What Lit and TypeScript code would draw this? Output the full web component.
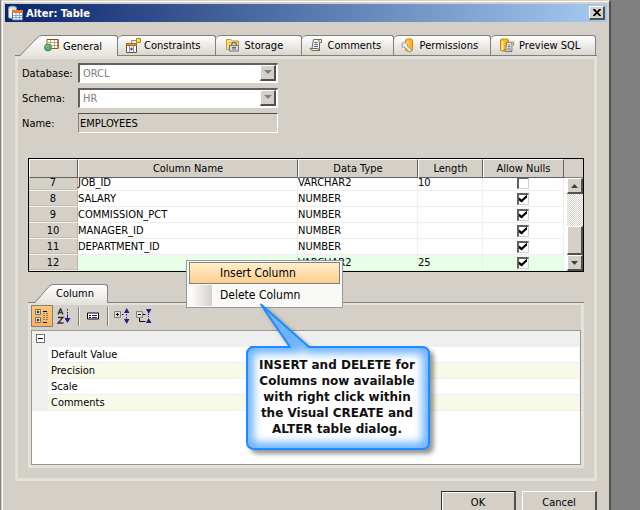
import { LitElement, html, css, svg } from "lit";
import { customElement, state } from "lit/decorators.js";
import { classMap } from "lit/directives/class-map.js";

const tableBody = svg`<path d="M3 1.500h11v9h-11z" fill="#fff" stroke="#8a5a1e"/><path d="M3 4.500h11M3 7.500h11M6.500 2v8M10.500 2v8" stroke="#c9a877" fill="none"/><path d="M3 1.500h11v9" stroke="#7a5424" fill="none"/>`;

const scroll = svg`<path d="M4.500 1.500h8v3h-2v8h-8l-1.500-2h2z" fill="#f4f2e6" stroke="#6f6a52"/><path d="M10.500 1.500c-1 .5-1 2.500 0 3M3 10.500h6c0 1 .5 2 1.500 2" fill="none" stroke="#6f6a52"/><path d="M5.500 4.500h3M5.500 6.500h3.500M5 8.500h4" stroke="#4a62a8" fill="none"/>`;

const icons = {
  general: svg`${tableBody}<circle cx="4" cy="9.500" r="3.500" fill="#58b070" stroke="#3c8a55"/><path d="M2.500 8.500a2 2 0 0 1 2-1.500" stroke="#a9dcb6" fill="none"/>`,
  constraints: svg`<path d="M1.500 5.500h10v9h-10z" fill="#fff" stroke="#7a4a1a"/><path d="M1.500 5.500h10v2h-10z" fill="#f0a040" stroke="#a85f1a"/><path d="M4.500 8v6.500M8.500 8v6.500" stroke="#8c8c9c"/><path d="M5 11h3M6.500 9.500v3" stroke="#1c50a0"/><path d="M6.500 5v-2.500h5" fill="none" stroke="#8c8c8c"/><path d="M11.500 .5h4v4h-4z" fill="#f8e04a" stroke="#9c8a30"/>`,
  storage: svg`<path d="M.5 11.500v-10h4.500l1.500 1.500h6v8.500z" fill="#ffe68a" stroke="#c69a28"/><path d="M3 12v-8h9" fill="none" stroke="#e4b93a"/><path d="M5.500 8v-1c0-3.500 5-3.500 5 0v1" fill="none" stroke="#777" stroke-width="1.500"/><path d="M3.500 7.500h9v5.500h-9z" fill="#d8d8d8" stroke="#777"/><path d="M6 9.500h4M6 11h4" stroke="#666"/>`,
  comments: scroll,
  permissions: svg`<path d="M4.500 2c0-1.500 7-1.500 7 0v10c0 1.500-7 1.500-7 0z" fill="#f9b522" stroke="#d4860c"/><path d="M6.500 3.500v8" stroke="#ffe58c" stroke-width="2"/><path d="M1 5.500l3-1.500 2.500 2v2l4 4-1.500 2.500-5-5-3-.5z" fill="#e6e6e6" stroke="#8a8a8a" stroke-width=".8"/>`,
  preview: svg`<path d="M.5 2c0-1.500 8-1.500 8 0v10c0 1.500-8 1.500-8 0z" fill="#f9b522" stroke="#c98a14"/><path d="M2.500 3v9" stroke="#ffe58c" stroke-width="2"/><g transform="translate(3 3) scale(.85)">${scroll}</g>`,
};

type Tab = { id: keyof typeof icons; label: string };
type Column = { n: number; name: string; type: string; len: string; nulls: boolean };

const TABS: Tab[] = [
  { id: "general", label: "General" },
  { id: "constraints", label: "Constraints" },
  { id: "storage", label: "Storage" },
  { id: "comments", label: "Comments" },
  { id: "permissions", label: "Permissions" },
  { id: "preview", label: "Preview SQL" },
];

const COLUMNS: Column[] = [
  { n: 7, name: "JOB_ID", type: "VARCHAR2", len: "10", nulls: false },
  { n: 8, name: "SALARY", type: "NUMBER", len: "", nulls: true },
  { n: 9, name: "COMMISSION_PCT", type: "NUMBER", len: "", nulls: true },
  { n: 10, name: "MANAGER_ID", type: "NUMBER", len: "", nulls: true },
  { n: 11, name: "DEPARTMENT_ID", type: "NUMBER", len: "", nulls: true },
  { n: 12, name: "", type: "VARCHAR2", len: "25", nulls: true },
];

const shared = css`
  *, *::before, *::after { box-sizing: border-box; }
  button, input, select { font: inherit; color: inherit; margin: 0; padding: 0; border-radius: 0; }
  svg { display: block; flex: none; }
`;

@customElement("column-grid")
class ColumnGrid extends LitElement {
  static styles = [shared, css`
    :host { display: flex; border: 1px solid #000; background: #fff; height: 114px; }
    .view { flex: 1; overflow: auto; scrollbar-width: none; }
    table { width: 100%; table-layout: fixed; border-collapse: separate; border-spacing: 0; }
    .c-num { width: 49px; } .c-type { width: 120px; } .c-len { width: 65px; } .c-null { width: 81px; }
    thead th {
      position: sticky; top: 0; z-index: 1; height: 19px; padding: 0; font-weight: normal; line-height: 16px;
      background: #d4d0c8; border: 1px solid; border-color: #fff #606060 #606060 #fff;
    }
    td, tbody th {
      height: 16px; padding: 0; line-height: 15px; font-weight: normal; white-space: nowrap;
      border-bottom: 1px solid #eee; border-right: 1px solid #eee;
    }
    tbody th { background: #d4d0c8; border-bottom-color: #f4f2ee; border-right-color: #bcb6a4; box-shadow: inset 0 -1px #c4beae; }
    .current td { background: #e6ffe6; border-color: #e0f8e0; }
    .tick { text-align: center; }
    input {
      appearance: none; display: block; width: 12px; height: 12px; margin: 0 auto; background: #fff;
      border: solid; border-width: 2px 1px 1px 2px; border-color: #606060 #d4d0c8 #d4d0c8 #606060;
    }
    input:checked::before {
      content: ""; display: block; width: 8px; height: 8px; background: #000;
      clip-path: polygon(0 38%, 32% 62%, 100% 0, 100% 38%, 32% 100%, 0 75%);
    }
    .bar { width: 19px; padding-left: 3px; display: flex; flex-direction: column; }
    .corner { height: 19px; margin-left: -3px; background: #d4d0c8; border-bottom: 1px solid #808080; }
    .arrow, .thumb {
      height: 16px; width: 16px; background: #d4d0c8; border: solid; border-width: 1px 2px 2px 1px;
      border-color: #fff #505050 #505050 #fff; display: grid; place-items: center;
    }
    .track { flex: 1; display: flex; flex-direction: column; justify-content: flex-end;
      background: repeating-conic-gradient(#fff 0 25%, #d4d0c8 0 50%) 0 0 / 2px 2px; }
    .thumb { height: 29px; }
  `];

  firstUpdated() {
    const view = this.renderRoot.querySelector(".view")!;
    view.scrollTop = view.scrollHeight;
  }

  render() {
    return html`
      <div class="view">
        <table>
          <colgroup><col class="c-num"><col><col class="c-type"><col class="c-len"><col class="c-null"></colgroup>
          <thead><tr><th></th><th scope="col">Column Name</th><th scope="col">Data Type</th><th scope="col">Length</th><th scope="col">Allow Nulls</th></tr></thead>
          <tbody>
            ${COLUMNS.map(c => html`
              <tr class=${classMap({ current: c.n === 12 })}>
                <th scope="row">${c.n}</th><td>${c.name}</td><td>${c.type}</td><td>${c.len}</td>
                <td class="tick"><input type="checkbox" aria-label="Allow nulls, row ${c.n}" .checked=${c.nulls}></td>
              </tr>`)}
          </tbody>
        </table>
      </div>
      <div class="bar">
        <div class="corner"></div>
        <button class="arrow" aria-label="Scroll up"><svg width="7" height="4"><path d="M0 4L3.500 0 7 4z" fill="#404040"/></svg></button>
        <div class="track"><div class="thumb"></div></div>
        <button class="arrow" aria-label="Scroll down"><svg width="7" height="4"><path d="M0 0h7L3.500 4z" fill="#404040"/></svg></button>
      </div>`;
  }
}

@customElement("column-properties")
class ColumnProperties extends LitElement {
  static styles = [shared, css`
    :host { display: block; }
    .tabs { display: flex; padding-left: 7px; height: 19px; border-bottom: 1px solid #808080; }
    .tab { display: flex; height: 19px; padding: 0; border: 0; background: none; }
    .tab span { width: 55px; height: 19px; padding-left: 3px; line-height: 18px; text-align: left;
      background: linear-gradient(#fff, #e6e4de); border: solid #808080; border-width: 1px 1px 0 0; border-radius: 0 3px 0 0; }
    .panel { border: 3px solid #e3e1da; border-top-width: 2px; }
    .tools { display: flex; align-items: center; height: 25px; padding-bottom: 3px; }
    .tools button { width: 22px; height: 22px; border: 0; background: none; display: grid; place-items: center; }
    .tools .on { background: linear-gradient(#ffc876, #ffb25c); border: 1px solid #808080; }
    .sep { width: 1px; height: 19px; background: #808080; margin: 0 3px; box-shadow: 1px 0 #f0eee8; }
    .props { height: 135px; background: #fff; border: 1px solid #989898; }
    .group { height: 16px; background: #efefef; padding: 3px 4px; }
    .group button { display: grid; place-items: center; width: 9px; height: 9px; border: 1px solid #707070; background: #fff; }
    .group button::before { content: ""; width: 5px; height: 1px; background: #000; }
    .list { margin: 0; padding: 0 1px 0 16px; background: #efefef; list-style: none; }
    .list li { height: 16px; padding-left: 3px; line-height: 15px; background: #fff; border-bottom: 1px solid #efefef; }
    .list li:nth-child(even) { background: #f9f9e9; }
  `];

  render() {
    return html`
      <div class="tabs">
        <button class="tab">
          <svg width="18" height="19"><defs><linearGradient id="g" x2="0" y2="1"><stop stop-color="#fff"/><stop offset="1" stop-color="#e6e4de"/></linearGradient></defs>
            <path d="M0 19L14 2.500Q16 .5 18 .5V19z" fill="url(#g)"/><path d="M0 18.500L14 2.500Q16 .5 18 .5" fill="none" stroke="#808080"/></svg>
          <span>Column</span>
        </button>
      </div>
      <div class="panel">
        <div class="tools">
          <button class="on" aria-label="Categorized"><svg width="16" height="16" fill="none">
            <path d="M1.500 1.500h5v5h-5zM1.500 9.500h5v5h-5z" fill="#fff" stroke="#707070"/><path d="M2.500 4h3M4 2.500v3M2.500 12h3M4 10.500v3" stroke="#000"/>
            <path d="M9 3.500h4M9 14.500h4" stroke="#000"/><path d="M9 5.500h6M9 7.500h6M9 9.500h6M9 11.500h6" stroke="#808080" stroke-dasharray="2 1"/></svg></button>
          <button aria-label="Sort by name"><svg width="16" height="16" fill="none">
            <path d="M2 6.500l2.500-6 2.500 6M3 4.500h3M2 9.500h5l-5 5.500h5.500" stroke="#303030" stroke-width="1.300"/>
            <path d="M11.500 1v1.500M11.500 4v1.500M11.500 6.500v4" stroke="#20208c"/><path d="M8.500 10h6l-3 5z" fill="#20208c"/></svg></button>
          <span class="sep"></span>
          <button aria-label="Property pages"><svg width="12" height="8" fill="none"><path d="M.5 1h11v6h-11z" fill="#fff" stroke="#000"/><path d="M2 3.500h2M2 5.500h2" stroke="#000"/><path d="M5 3.500h5M5 5.500h5" stroke="#20208c"/></svg></button>
          <span class="sep"></span>
          <button aria-label="Expand all"><svg width="16" height="16" fill="none"><path d="M.5 3.500h6v6h-6z" fill="#ddd" stroke="#808080"/><path d="M2 6.500h3M3.500 5v3M8 6.500h1.500" stroke="#000"/>
            <path d="M10 5h5.500L12.700 0zM10 11h5.500l-2.800 5z" fill="#20208c"/><path d="M12.500 6v1.500M12.500 9v1.500" stroke="#20208c"/></svg></button>
          <button aria-label="Collapse all"><svg width="16" height="16" fill="none"><path d="M.5 3.500h6v6h-6z" fill="#ddd" stroke="#808080"/><path d="M2 6.500h3M7 6.500h2.500M3.500 10v3.500h6" stroke="#000"/>
            <path d="M10 1h5.500l-2.800 5zM10 15h5.500l-2.800-5z" fill="#20208c"/><path d="M12.500 6v4" stroke="#20208c" stroke-dasharray="1 1"/></svg></button>
        </div>
        <div class="props">
          <div class="group"><button aria-label="Collapse group"></button></div>
          <ul class="list"><li>Default Value</li><li>Precision</li><li>Scale</li><li>Comments</li></ul>
        </div>
      </div>`;
  }
}

@customElement("app-root")
class AppRoot extends LitElement {
  @state() private active = "general";

  static styles = [shared, css`
    :host {
      display: flex; height: 100vh; overflow: hidden; background: #808080; padding: 0 29px 0 1px;
      font: 11px "DejaVu Sans Condensed", "DejaVu Sans", sans-serif; color: #000;
    }
    .dialog {
      position: relative; flex: 1; align-self: flex-start; background: #d4d0c8; padding: 2px 2px 10px 2px;
      border: solid; border-width: 1px 2px 0 1px; border-color: #d4d0c8 #505050 #505050 #d4d0c8;
      box-shadow: inset 1px 1px #fff;
    }
    .title { display: flex; align-items: center; gap: 3px; height: 18px; margin: 1px 0 0 1px; padding: 0 2px;
      background: linear-gradient(90deg, #0a246a, #a6caf0); color: #fff; }
    h1 { flex: 1; margin: 0; font-size: 11px; }
    .close { width: 16px; height: 14px; background: #d4d0c8; border: solid; border-width: 1px 2px 2px 1px;
      border-color: #fff #505050 #505050 #fff; display: grid; place-items: center; }
    .body { margin: 13px 10px 0 11px; }
    .tabs { display: flex; height: 21px; padding-left: 5px; border-bottom: 1px solid #808080; }
    .tab { flex: 99 1 0; display: flex; align-items: center; gap: 3px; height: 20px; padding: 0 0 0 7px; white-space: nowrap;
      border: solid #808080; border-width: 1px 1px 0 0; border-radius: 5px 3px 0 0; background: linear-gradient(#fff, #d9d6cf); }
    .storage { flex-grow: 83; padding-left: 10px; } .comments { flex-grow: 93; }
    .preview { flex-grow: 105; margin-right: 1px; padding-left: 9px; }
    .general { flex: none; height: 21px; padding: 0; border: 0; background: none; gap: 0; }
    .face { display: flex; align-items: center; gap: 3px; width: 76px; height: 21px; padding-left: 2px;
      background: linear-gradient(#fff, #e6e4de); border: solid #808080; border-width: 1px 1px 0 0; border-radius: 0 3px 0 0; }
    .page { border: 3px solid #e3e1da; padding: 4px 10px 10px 10px; }
    .form { display: grid; grid-template-columns: 56px 200px; row-gap: 5px; margin-left: -6px; align-items: center; }
    .combo, .name { height: 20px; border: solid; border-width: 2px 1px 1px 2px; border-color: #606060 #fff #fff #606060; }
    .combo { display: flex; background: #fff; padding-right: 1px; }
    select { appearance: none; flex: 1; border: 0; background: none; color: #808080; padding-left: 3px; opacity: 1; }
    .drop { width: 16px; height: 16px; background: #d4d0c8; display: grid; place-items: center;
      border: solid; border-width: 1px 2px 2px 1px; border-color: #fff #505050 #505050 #fff; }
    .name { background: #d4d0c8; width: 200px; border-width: 1px; border-color: #505050 #fff #fff #808080; padding-left: 1px; }
    column-grid { margin-top: 25px; }
    column-properties { margin-top: 12px; }
    .actions { display: flex; justify-content: flex-end; gap: 6px; margin-top: 10px; }
    .actions button { width: 75px; height: 23px; background: #d4d0c8; border: solid; border-width: 1px 2px 2px 1px;
      border-color: #fff #505050 #505050 #fff; }
    .actions .default { border-left-color: #303030; border-top-color: #303030; box-shadow: inset 1px 1px #fff; }
    .menu { position: absolute; left: 184px; top: 259px; width: 157px; background: #f9f9f7; border: 1px solid #989898; padding: 1px 2px; font-size: 12px; }
    .menu button { display: flex; align-items: center; width: 100%; height: 22px; border: 1px solid transparent; background: none; }
    .menu button::before { content: ""; width: 22px; height: 21px; margin-right: 8px; background: linear-gradient(90deg, #fff, #d4d0c8); }
    .menu .hot { background: linear-gradient(#ffefca, #ffce90); border-color: #808080; }
    .menu .hot::before { background: none; }
    .callout { position: absolute; left: 236px; top: 296px; width: 200px; height: 164px; }
    .callout svg { position: absolute; inset: 0; filter: drop-shadow(4px 4px 2px rgba(0, 0, 0, .4)); }
    .callout p { position: relative; margin: 0; padding: 60px 10px 0 8px; text-align: center; white-space: nowrap;
      font: bold 12px/16px "DejaVu Sans", sans-serif; color: #101010; }
  `];

  private tab(t: Tab) {
    const icon = html`<svg width="16" height="16" viewBox="0 0 16 16" fill="none">${icons[t.id]}</svg>`;
    const first = t.id === "general";
    return html`
      <button role="tab" aria-selected=${this.active === t.id} class="tab ${t.id}" @click=${() => (this.active = t.id)}>
        ${first ? html`
          <svg width="22" height="21"><defs><linearGradient id="s" x2="0" y2="1"><stop stop-color="#fff"/><stop offset="1" stop-color="#e6e4de"/></linearGradient></defs>
            <path d="M0 21L17 3Q19.500 .5 22 .5V21z" fill="url(#s)"/><path d="M0 20.500L17 3Q19.500 .5 22 .5" fill="none" stroke="#808080"/></svg>
          <span class="face">${icon}${t.label}</span>` : html`${icon}${t.label}`}
      </button>`;
  }

  private combo(id: string, label: string, value: string) {
    return html`
      <label for=${id}>${label}</label>
      <div class="combo"><select id=${id} disabled><option>${value}</option></select>
        <span class="drop"><svg width="8" height="5"><path d="M1 5h1l3-1 3-4-3 4z" fill="#fff"/><path d="M0 0h8L4 4z" fill="#808080"/></svg></span></div>`;
  }

  render() {
    const shape = "M13 50H52L23 7.500 71 50H184Q191 50 191 57V145Q191 152 184 152H17Q9 152 9 145V57Q9 50 17 50z";
    return html`
      <main class="dialog">
        <header class="title">
          <svg width="16" height="16" fill="none"><path d="M1.500 3c0-2.500 8-2.500 8 0v9c0 2-8 2-8 0z" fill="#d4dce6" stroke="#8a98ac"/><path d="M3.500 4v8" stroke="#fff" stroke-width="2"/>
            <path d="M5.500 6.500h10v8.500h-10z" fill="#fff" stroke="#5878b0"/><path d="M5 5h11v3h-11z" fill="#ee7a28"/><path d="M6 10.500h9M6 12.500h9M9 8v7M12.500 8v7" stroke="#88a4d0"/></svg>
          <h1>Alter: Table</h1>
          <button class="close" aria-label="Close"><svg width="8" height="7"><path d="M.5 0l7 7M7.500 0l-7 7" stroke="#000" stroke-width="1.800"/></svg></button>
        </header>
        <div class="body">
          <div class="tabs" role="tablist">${TABS.map(t => this.tab(t))}</div>
          <section class="page">
            <div class="form">
              ${this.combo("db", "Database:", "ORCL")}
              ${this.combo("schema", "Schema:", "HR")}
              <label for="name">Name:</label><input id="name" class="name" readonly value="EMPLOYEES">
            </div>
            <column-grid></column-grid>
            <column-properties></column-properties>
          </section>
          <div class="actions"><button class="default">OK</button><button>Cancel</button></div>
        </div>
        <div class="menu" role="menu">
          <button role="menuitem" class="hot">Insert Column</button>
          <button role="menuitem">Delete Column</button>
        </div>
        <aside class="callout">
          <svg width="200" height="164" fill="none">
            <defs><clipPath id="inside"><path d=${shape}/></clipPath><filter id="soft"><feGaussianBlur stdDeviation="4"/></filter></defs>
            <path d=${shape} fill="#fff"/>
            <g clip-path="url(#inside)"><path d=${shape} stroke="#6cb2ff" stroke-width="13" filter="url(#soft)"/></g>
            <path d=${shape} stroke="#1e8cff" stroke-width="2" stroke-linejoin="round"/>
          </svg>
          <p>INSERT and DELETE for<br>Columns now available<br>with right click within<br>the Visual CREATE and<br>ALTER table dialog.</p>
        </aside>
      </main>`;
  }
}
